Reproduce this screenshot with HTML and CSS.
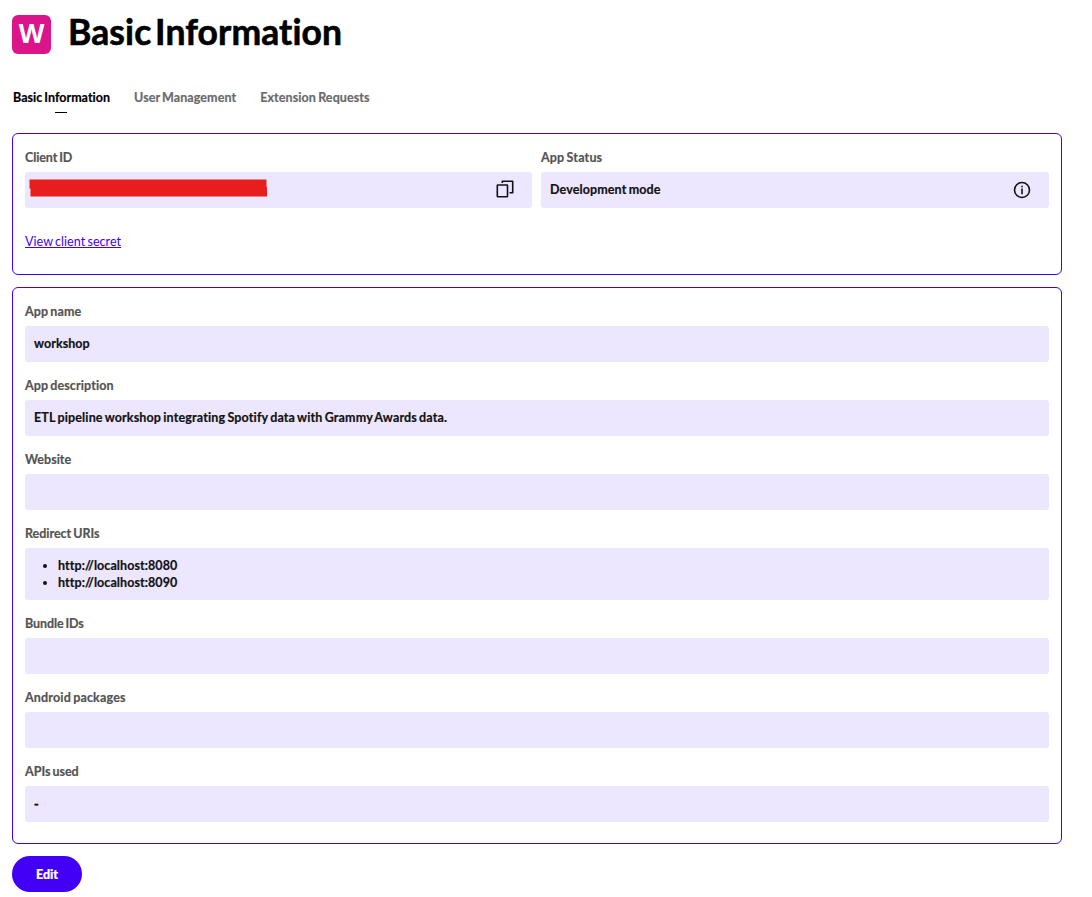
FILE: index.html
```html
<!DOCTYPE html>
<html lang="en">
<head>
<meta charset="utf-8">
<title>Basic Information</title>
<link rel="stylesheet" href="styles.css">
</head>
<body>
<main class="page">
  <header class="header">
    <div class="logo">W</div>
    <h1 class="title">Basic Information</h1>
  </header>
  <nav class="tabs">
    <a class="tab tab-active"><span class="t-basic">Basic Information</span></a>
    <a class="tab"><span class="t-user">User Management</span></a>
    <a class="tab"><span class="t-ext">Extension Requests</span></a>
  </nav>
  <section class="panel panel-client">
    <div class="columns">
      <div class="field">
        <div class="label"><span class="l-short">Client ID</span></div>
        <div class="value value-action">
          <svg class="redaction" width="239" height="20" viewBox="0 0 239 20"><path d="M.5 1.500H237.500V9H238V18.500H1.500V10.500H.5Z" fill="#e81e1e"/></svg>
          <svg class="icon icon-copy" width="18" height="18" viewBox="0 0 18 18" fill="none" stroke="#121212" stroke-width="1.600" stroke-linejoin="round"><rect x="1.300" y="5" width="10.200" height="11.800" rx=".5"/><path d="M6.300 3V1.300H16.700V12.700H13.500"/></svg>
        </div>
      </div>
      <div class="field">
        <div class="label"><span class="l-wide">App Status</span></div>
        <div class="value value-action">
          <span class="v-dev">Development mode</span>
          <svg class="icon" width="18" height="18" viewBox="0 0 18 18"><circle cx="9" cy="9" r="7.500" fill="none" stroke="#121212" stroke-width="1.600"/><path d="M8.200 7.500H9.800V13.300H8.200ZM8.200 4.700H9.800V6.300H8.200Z" fill="#121212"/></svg>
        </div>
      </div>
    </div>
    <a class="secret">View client secret</a>
  </section>
  <section class="panel panel-details">
    <div class="field"><div class="label"><span class="l-name">App name</span></div><div class="value"><span class="v-work">workshop</span></div></div>
    <div class="field"><div class="label"><span class="l-desc">App description</span></div><div class="value"><span class="v-desc">ETL pipeline workshop integrating Spotify data with Grammy Awards data.</span></div></div>
    <div class="field"><div class="label">Website</div><div class="value"></div></div>
    <div class="field"><div class="label"><span class="l-uri">Redirect URIs</span></div>
      <div class="value value-list"><ul class="uris"><li>http://localhost:8080</li><li>http://localhost:8090</li></ul></div></div>
    <div class="field"><div class="label"><span class="l-short">Bundle IDs</span></div><div class="value"></div></div>
    <div class="field"><div class="label"><span class="l-wide">Android packages</span></div><div class="value"></div></div>
    <div class="field"><div class="label"><span class="l-uri">APIs used</span></div><div class="value value-dash">-</div></div>
  </section>
  <button class="edit">Edit</button>
</main>
</body>
</html>
```
FILE: styles.css
```css
* { box-sizing: border-box; }
body { margin: 0; background: #fff; color: #121212; font: 700 12.500px/17px Lato, "Open Sans", sans-serif; word-spacing: -1px; -webkit-text-stroke: .2px currentColor; }
.page { width: 1062px; padding: 15px 0 0 12px; }
.header { display: flex; height: 74px; gap: 17px; }
.logo { width: 39px; height: 39px; border-radius: 6px; background: #dc148c; color: #fff; font: 700 26.500px/37px "Open Sans", sans-serif; text-align: center; -webkit-text-stroke: 0; }
.title { margin: -1px 0 0; color: #000; font-size: 35.500px; line-height: 36px; letter-spacing: .1px; word-spacing: -5px; white-space: nowrap; -webkit-text-stroke: .6px #000; }
.tabs { display: flex; gap: 24px; height: 44px; padding-left: 1px; color: #6a6a6a; }
.tab { white-space: nowrap; }
.t-basic { letter-spacing: .02px; }
.t-user { letter-spacing: .08px; }
.t-ext { letter-spacing: .1px; }
.tab-active { color: #000; }
.tab-active::after { content: ""; display: block; width: 12px; height: 1px; margin: 6px 0 0 42px; background: #000; }
.panel { width: 1050px; padding: 15px 12px 0; border: 1px solid #4100f5; border-radius: 6px; }
.panel-client { height: 142px; margin-bottom: 12px; }
.panel-details { height: 557px; margin-bottom: 12px; display: flex; flex-direction: column; gap: 15px; }
.columns { display: grid; grid-template-columns: 507px 508px; gap: 9px; }
.label { height: 23px; color: #535353; white-space: nowrap; }
.l-short { letter-spacing: -.1px; }
.l-wide { letter-spacing: .17px; }
.l-name { letter-spacing: .1px; }
.l-desc { letter-spacing: .1px; }
.l-uri { letter-spacing: -.02px; }
.value { height: 36px; padding: 9px; border-radius: 3px; background: #ece6ff; white-space: nowrap; }
.v-work { letter-spacing: .06px; }
.v-dev { letter-spacing: .12px; }
.v-desc { letter-spacing: .15px; }
.value-action { display: flex; justify-content: space-between; padding-right: 18px; }
.value-dash { padding-top: 10px; -webkit-text-stroke-width: .5px; }
.redaction { margin: -3px 0 0 -5px; }
.icon-copy { margin-top: -1px; }
.value-list { height: 52px; }
.uris { margin: 0; padding-left: 24px; letter-spacing: .08px; }
.secret { display: inline-block; margin-top: 25px; color: #4100f5; font-weight: 400; letter-spacing: .05px; text-decoration: underline; text-underline-offset: 1px; -webkit-text-stroke: 0; }
.edit { display: block; width: 70px; height: 36px; padding: 1px 0 0; border: 0; border-radius: 18px; background: #4100f5; color: #fff; font: inherit; font-weight: 900; }
```
